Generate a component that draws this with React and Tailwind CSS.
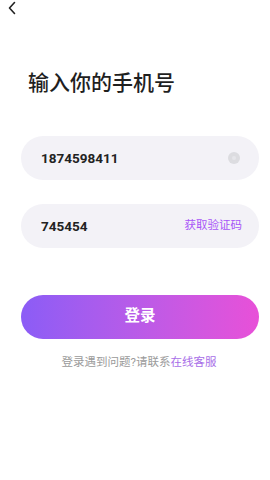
export default function App() {
  return (
    <div
      className="h-[480px] w-[270px] bg-white"
      style={{ fontFamily: 'Roboto, "Noto Sans CJK SC", sans-serif' }}
    >
      <div className="flex h-[16px] items-center pl-[7px]">
        <svg width="10" height="14" viewBox="0 0 10 14" fill="none">
          <path d="M7.5 1.5 L2.5 7 L7.5 12.5" stroke="#222" strokeWidth="1.6" strokeLinecap="round" strokeLinejoin="round" />
        </svg>
      </div>

      <h1 className="mt-[52px] pl-[28px] text-[21px] font-medium leading-[30px] text-[#1f1f1f]">
        输入你的手机号
      </h1>

      <div className="ml-[21px] mt-[38px] flex w-[238px] flex-col gap-[24px]">
        <div className="flex h-[44px] items-center justify-between rounded-full bg-[#f3f2f7] pl-[20px] pr-[19px]">
          <span className="text-[13.5px] font-bold text-[#222]">1874598411</span>
          <span className="flex h-[12px] w-[12px] items-center justify-center rounded-full bg-[#dcdce0]">
            <span className="h-[4px] w-[4px] rounded-full bg-[#e6e6ea]" />
          </span>
        </div>
        <div className="flex h-[44px] items-center justify-between rounded-full bg-[#f3f2f7] pl-[20px] pr-[17px]">
          <span className="text-[13.5px] font-bold text-[#222]">745454</span>
          <span className="text-[11.5px] text-[#a855f7]">获取验证码</span>
        </div>
      </div>

      <button className="ml-[21px] mt-[47px] flex h-[44px] w-[238px] items-center justify-center rounded-full bg-gradient-to-r from-[#8b5cf6] to-[#e850d8] text-[15.5px] font-bold text-white">
        登录
      </button>

      <p className="mt-[14px] w-[270px] pl-[8px] text-center text-[11.5px] leading-[18px] text-[#9a9a9a]">
        登录遇到问题?请联系<span className="text-[#a86ee8]">在线客服</span>
      </p>
    </div>
  )
}
